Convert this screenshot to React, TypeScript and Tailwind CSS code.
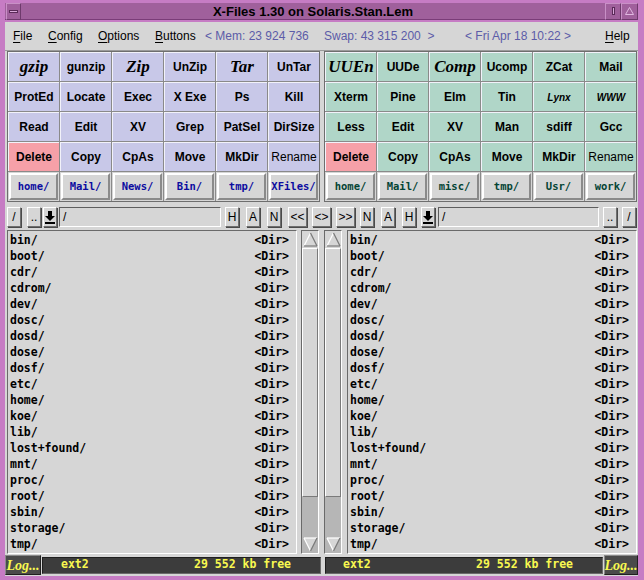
import React from 'react';

type Kind = 'serif' | 'bold' | 'plain' | 'tiny';
type Btn = { t: string; k?: Kind; del?: boolean };

const leftGrid: Btn[][] = [
  [{ t: 'gzip', k: 'serif' }, { t: 'gunzip' }, { t: 'Zip', k: 'serif' }, { t: 'UnZip' }, { t: 'Tar', k: 'serif' }, { t: 'UnTar' }],
  [{ t: 'ProtEd' }, { t: 'Locate' }, { t: 'Exec' }, { t: 'X Exe' }, { t: 'Ps' }, { t: 'Kill' }],
  [{ t: 'Read' }, { t: 'Edit' }, { t: 'XV' }, { t: 'Grep' }, { t: 'PatSel' }, { t: 'DirSize' }],
  [{ t: 'Delete', del: true }, { t: 'Copy' }, { t: 'CpAs' }, { t: 'Move' }, { t: 'MkDir' }, { t: 'Rename', k: 'plain' }],
];

const rightGrid: Btn[][] = [
  [{ t: 'UUEn', k: 'serif' }, { t: 'UUDe' }, { t: 'Comp', k: 'serif' }, { t: 'Ucomp' }, { t: 'ZCat' }, { t: 'Mail' }],
  [{ t: 'Xterm' }, { t: 'Pine' }, { t: 'Elm' }, { t: 'Tin' }, { t: 'Lynx', k: 'tiny' }, { t: 'WWW', k: 'tiny' }],
  [{ t: 'Less' }, { t: 'Edit' }, { t: 'XV' }, { t: 'Man' }, { t: 'sdiff' }, { t: 'Gcc' }],
  [{ t: 'Delete', del: true }, { t: 'Copy' }, { t: 'CpAs' }, { t: 'Move' }, { t: 'MkDir' }, { t: 'Rename', k: 'plain' }],
];

const leftDirs = ['home/', 'Mail/', 'News/', 'Bin/', 'tmp/', 'XFiles/'];
const rightDirs = ['home/', 'Mail/', 'misc/', 'tmp/', 'Usr/', 'work/'];

const files = [
  'bin/', 'boot/', 'cdr/', 'cdrom/', 'dev/', 'dosc/', 'dosd/', 'dose/', 'dosf/', 'etc/',
  'home/', 'koe/', 'lib/', 'lost+found/', 'mnt/', 'proc/', 'root/', 'sbin/', 'storage/', 'tmp/',
];

const kindClass: Record<Kind, string> = {
  serif: "font-['Liberation_Serif'] font-bold italic text-[17px]",
  bold: "font-['Liberation_Sans'] font-bold text-[12px]",
  plain: "font-['Liberation_Sans'] text-[12px]",
  tiny: "font-['Liberation_Sans'] font-bold italic text-[10px]",
};

const ButtonPanel = ({ rows, dirs, face, dirColor }: { rows: Btn[][]; dirs: string[]; face: string; dirColor: string }) => (
  <div className="w-[313px] grid grid-cols-6 gap-px bg-[#8a8a8a] border border-[#6e6e6e]">
    {rows.flat().map((b, i) => (
      <div
        key={i}
        className={`h-[29px] flex items-center justify-center text-black border-t border-l border-t-[#f2f2fa] border-l-[#f2f2fa] ${b.del ? 'bg-[#f6a0a8]' : face} ${kindClass[b.k ?? 'bold']}`}
      >
        {b.t}
      </div>
    ))}
    {dirs.map((d) => (
      <div key={d} className="h-[29px] bg-[#d6d6d6] p-px">
        <div className={`h-full flex items-center justify-center border-2 border-t-white border-l-white border-r-[#8a8a8a] border-b-[#8a8a8a] font-['DejaVu_Sans_Mono'] font-bold text-[10.5px] ${dirColor}`}>
          {d}
        </div>
      </div>
    ))}
  </div>
);

const SmallBtn = ({ children, w = 'w-[14px]', className = '' }: { children: React.ReactNode; w?: string; className?: string }) => (
  <div className={`${w} h-[20px] shrink-0 flex items-center justify-center bg-[#d6d6d6] border border-t-white border-l-white border-r-[#6e6e6e] border-b-[#6e6e6e] shadow-[1px_1px_0_#4a4a4a] font-['Liberation_Sans'] text-[12px] text-black ${className}`}>
    {children}
  </div>
);

const DownIcon = () => (
  <svg width="12" height="14" viewBox="0 0 12 14">
    <rect x="4" y="1" width="4" height="5" fill="#000" />
    <polygon points="1,6 11,6 6,11" fill="#000" />
    <rect x="1" y="12" width="10" height="2" fill="#000" />
  </svg>
);

const PathInput = ({ w }: { w: string }) => (
  <div className={`${w} h-[20px] shrink-0 flex items-center pl-[3px] bg-[#d6d6d6] border border-t-[#5e5e5e] border-l-[#5e5e5e] border-b-white border-r-white font-['Liberation_Sans'] text-[12px] text-black`}>
    /
  </div>
);

const FileList = () => (
  <div className="w-[290px] h-[324px] pt-[2px] bg-[#d6d6d6] border border-t-[#6a6a6a] border-l-[#6a6a6a] border-b-white border-r-white font-['DejaVu_Sans_Mono'] font-bold text-[11.5px] text-black">
    {files.map((f) => (
      <div key={f} className="h-[16px] flex items-center justify-between pl-[2px] pr-[7px]">
        <span>{f}</span>
        <span>&lt;Dir&gt;</span>
      </div>
    ))}
  </div>
);

const ScrollBar = () => (
  <div className="w-[18px] h-[324px] flex flex-col bg-[#d6d6d6] border border-t-[#6a6a6a] border-l-[#6a6a6a] border-b-white border-r-white">
    <div className="h-[17px] flex items-start justify-center pt-[1px]">
      <svg width="15" height="15" viewBox="0 0 15 15">
        <polygon points="7.5,1 14,14 1,14" fill="#d6d6d6" />
        <line x1="7.5" y1="1" x2="1" y2="14" stroke="#ffffff" strokeWidth="1.2" />
        <line x1="7.5" y1="1" x2="14" y2="14" stroke="#7a7a7a" strokeWidth="1.2" />
        <line x1="1" y1="14" x2="14" y2="14" stroke="#7a7a7a" strokeWidth="1.2" />
      </svg>
    </div>
    <div className="h-[249px] bg-[#d6d6d6] border border-t-white border-l-white border-r-[#7a7a7a] border-b-[#7a7a7a]" />
    <div className="flex-1 bg-[#b6b6b6] flex items-end justify-center pb-[1px]">
      <svg width="15" height="15" viewBox="0 0 15 15">
        <polygon points="1,1 14,1 7.5,14" fill="#d6d6d6" />
        <line x1="1" y1="1" x2="14" y2="1" stroke="#ffffff" strokeWidth="1.2" />
        <line x1="1" y1="1" x2="7.5" y2="14" stroke="#ffffff" strokeWidth="1.2" />
        <line x1="14" y1="1" x2="7.5" y2="14" stroke="#7a7a7a" strokeWidth="1.2" />
      </svg>
    </div>
  </div>
);

const LogBtn = ({ w }: { w: string }) => (
  <div className={`${w} h-[20px] shrink-0 flex items-center justify-center bg-[#4a4a4a] border border-t-[#8a8a8a] border-l-[#8a8a8a] border-r-[#202020] border-b-[#202020] font-['Liberation_Serif'] font-bold italic text-[14px] text-[#f8f850]`}>
    Log...
  </div>
);

const Status = ({ w, pl, pr }: { w: string; pl: string; pr: string }) => (
  <div className={`${w} h-[17px] shrink-0 flex items-center justify-between ${pl} ${pr} bg-[#3c3c3c] border border-t-[#1e1e1e] border-l-[#1e1e1e] border-b-[#6a6a6a] border-r-[#6a6a6a] font-['DejaVu_Sans_Mono'] font-bold text-[11.5px] text-[#f8f850]`}>
    <span>ext2</span>
    <span>29 552 kb free</span>
  </div>
);

const U = ({ c }: { c: string }) => <span className="underline underline-offset-2 decoration-1">{c}</span>;

export default function App() {
  return (
    <div className="w-[644px] h-[580px] bg-[#c67cc4] pt-[3px] overflow-hidden relative">
      {/* title bar */}
      <div className="ml-[5px] w-[633px] h-[17px] bg-[#a0609c] flex items-center border-b border-[#7a3c78]">
        <div className="w-[15px] h-[17px] ml-[1px] flex items-center justify-center border border-t-[#c890c6] border-l-[#c890c6] border-r-[#6e3a6c] border-b-[#6e3a6c]">
          <div className="w-[9px] h-[3px] bg-[#d8a8d8] border border-[#5a2a58]" />
        </div>
        <div className="flex-1 text-center font-['Liberation_Sans'] font-bold text-[13px] text-black leading-none">
          X-Files 1.30 on Solaris.Stan.Lem
        </div>
        <div className="w-[16px] h-[17px] flex items-center justify-center border border-t-[#c890c6] border-l-[#c890c6] border-r-[#6e3a6c] border-b-[#6e3a6c]">
          <div className="w-[3px] h-[8px] bg-[#d8a8d8] border border-[#5a2a58]" />
        </div>
        <div className="w-[17px] h-[17px] flex items-center justify-center border border-t-[#c890c6] border-l-[#c890c6] border-r-[#6e3a6c] border-b-[#6e3a6c]">
          <svg width="9" height="8" viewBox="0 0 9 8">
            <polygon points="4.5,0.5 8.5,7.5 0.5,7.5" fill="none" stroke="#e0b8e0" strokeWidth="1" />
          </svg>
        </div>
      </div>
      <div className="h-[2px]" />

      {/* main content */}
      <div className="ml-[5px] w-[633px] h-[554px] bg-[#d6d6d6] flex flex-col">
        {/* menu bar */}
        <div className="h-[29px] shrink-0 flex items-center pl-[8px] font-['Liberation_Sans'] text-[12px] text-black border-b border-[#9a9a9a]">
          <span className="w-[35px]"><U c="F" />ile</span>
          <span className="w-[50px]"><U c="C" />onfig</span>
          <span className="w-[57px]"><U c="O" />ptions</span>
          <span className="w-[50px]"><U c="B" />uttons</span>
          <span className="w-[119px] text-[#5c5ca8] whitespace-pre">&lt; Mem: 23 924 736</span>
          <span className="w-[141px] text-[#5c5ca8] whitespace-pre">Swap: 43 315 200  &gt;</span>
          <span className="w-[140px] text-[#5c5ca8] whitespace-pre">&lt; Fri Apr 18 10:22 &gt;</span>
          <span><U c="H" />elp</span>
        </div>

        {/* command buttons */}
        <div className="flex shrink-0 pl-[2px] gap-[4px]">
          <ButtonPanel rows={leftGrid} dirs={leftDirs} face="bg-[#c8c8e8]" dirColor="text-[#0c0ca0]" />
          <ButtonPanel rows={rightGrid} dirs={rightDirs} face="bg-[#b0d6c8]" dirColor="text-[#044434]" />
        </div>

        {/* path bar */}
        <div className="h-[28px] shrink-0 flex items-center pl-[2px] pt-[1px]">
          <SmallBtn>/</SmallBtn>
          <SmallBtn className="ml-[6px] text-[9px]">..</SmallBtn>
          <SmallBtn className="ml-[2px]"><DownIcon /></SmallBtn>
          <div className="ml-[2px]"><PathInput w="w-[162px]" /></div>
          <SmallBtn className="ml-[4px]">H</SmallBtn>
          <SmallBtn className="ml-[7px]">A</SmallBtn>
          <SmallBtn className="ml-[7px]">N</SmallBtn>
          <SmallBtn w="w-[19px]" className="ml-[7px] text-[9px]">&lt;&lt;</SmallBtn>
          <SmallBtn w="w-[19px]" className="ml-[5px] text-[9px]">&lt;&gt;</SmallBtn>
          <SmallBtn w="w-[19px]" className="ml-[5px] text-[9px]">&gt;&gt;</SmallBtn>
          <SmallBtn className="ml-[5px]">N</SmallBtn>
          <SmallBtn className="ml-[7px]">A</SmallBtn>
          <SmallBtn className="ml-[7px]">H</SmallBtn>
          <SmallBtn className="ml-[5px]"><DownIcon /></SmallBtn>
          <div className="ml-[3px]"><PathInput w="w-[161px]" /></div>
          <SmallBtn className="ml-[4px] text-[9px]">..</SmallBtn>
          <SmallBtn className="ml-[5px]">/</SmallBtn>
        </div>

        {/* file lists */}
        <div className="flex shrink-0 pl-[2px]">
          <FileList />
          <div className="ml-[4px]"><ScrollBar /></div>
          <div className="ml-[5px]"><ScrollBar /></div>
          <div className="ml-[5px]"><FileList /></div>
        </div>

        {/* status line */}
        <div className="flex-1 flex items-center">
          <LogBtn w="w-[36px]" />
          <div className="ml-[1px]"><Status w="w-[279px]" pl="pl-[18px]" pr="pr-[29px]" /></div>
          <div className="ml-[4px]"><Status w="w-[278px]" pl="pl-[17px]" pr="pr-[29px]" /></div>
          <div className="ml-[1px]"><LogBtn w="w-[34px]" /></div>
        </div>
      </div>
    </div>
  );
}
